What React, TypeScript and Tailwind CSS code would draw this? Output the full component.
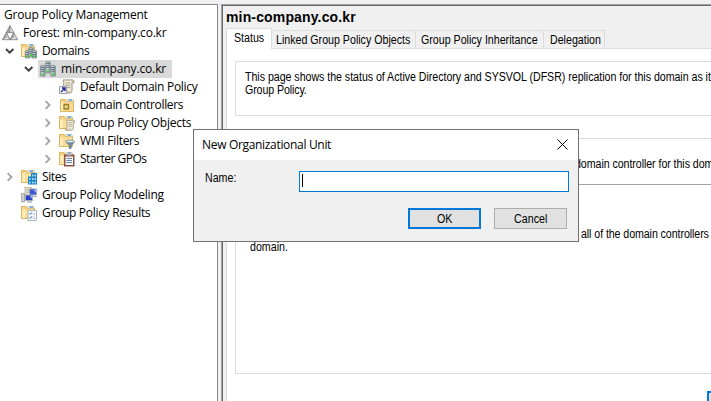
import React from "react";

const seg = "font-['Open_Sans','Noto_Sans',sans-serif] text-[12px] leading-[18px] whitespace-nowrap text-black";
const ms = "font-['Liberation_Sans',Arial,sans-serif] text-[12px] leading-[14px] whitespace-nowrap text-black";

// Condensed sans used by the classic dialogs and tab pages.
function Narrow({ children, center, track = "" }: { children: React.ReactNode; center?: boolean; track?: string }) {
  return (
    <span className={`inline-block scale-x-[0.887] ${center ? "origin-center" : "origin-left"} ${track}`}>{children}</span>
  );
}

function Chevron({ open }: { open?: boolean }) {
  return (
    <svg width="10" height="10" viewBox="0 0 10 10" fill="none" className="shrink-0">
      {open ? (
        <path d="M1 3l3.700 3.700L8.400 3" stroke="#404040" strokeWidth="2" />
      ) : (
        <path d="M2.700 1.200l3.800 3.800-3.800 3.800" stroke="#a6a6a6" strokeWidth="1.9" />
      )}
    </svg>
  );
}

function Folder() {
  return (
    <g>
      <path d="M.5 3V1.500h4.500L6 3h7.500v10.500H.5z" fill="#f3d283" stroke="#dcb65c" />
      <path d="M6.500 1.500h6.500V3.500H6.500z" fill="#fff" stroke="#c9b27a" strokeWidth=".6" />
      <path d="M8.500 1.500h3.500v1.300H8.500z" fill="#3f9be0" />
      <path d="M1 4.500h12V13H1z" fill="#f9dd96" />
      <path d="M1 4.500h3V13H1z" fill="#fdebb8" />
    </g>
  );
}

function Server({ x, y, h = 11 }: { x: number; y: number; h?: number }) {
  return (
    <g transform={`translate(${x} ${y})`}>
      <path d={`M.3 1L2.500.2 4.700 1v${h - 1}H.3z`} fill="#c3ced2" stroke="#65757c" strokeWidth=".7" />
      <path d={`M3.200 1h1.300v${h - 1.5}H3.200z`} fill="#8698a0" />
      <path d="M.8 2.500h3.200M.8 4.500h3.200M.8 6.300h3.200" stroke="#50626b" strokeWidth=".8" />
      <path d={`M1.500 ${h - 2.5}h2v1.700h-2z`} fill="#2fdc1c" />
    </g>
  );
}

function Scroll({ x, y, s }: { x: number; y: number; s: number }) {
  return (
    <g transform={`translate(${x} ${y}) scale(${s})`}>
      <path d="M3 .7h10.500q1.800.8 1.300 3H12.500v9q-.5 2.300-2.500 2.300H1.500q-1-2 1-2.700h1V3.500Q2 2 3 .7z" fill="#f1ead3" stroke="#8d8878" />
      <path d="M12.300 3.500V1.500q1.500-.8 2.300.7v1.300z" fill="#c8bf9f" />
      <path d="M5.500 4h5M5.500 6.500h5M5.500 9h5" stroke="#9c9886" />
      <path d="M2.500 13.500h7.500" stroke="#b9b294" />
    </g>
  );
}

function Icon({ kind }: { kind: string }) {
  return (
    <svg width="16" height="16" viewBox="0 0 16 16" fill="none" className="shrink-0">
      {kind === "forest" && (
        <g stroke="#707070" strokeWidth=".8" strokeLinejoin="round">
          <path d="M8 .6L15.500 14.700H.5z" fill="#fff" />
          <path d="M8 .8v6.400L4.500 7.600z" fill="#a5a5a5" strokeWidth=".3" />
          <path d="M8 .8v6.400l3.500.4z" fill="#dedede" strokeWidth=".3" />
          <path d="M4.400 7.700v4.800L.7 14.600z" fill="#a5a5a5" strokeWidth=".3" />
          <path d="M4.400 7.700v4.800L8 14.600z" fill="#dedede" strokeWidth=".3" />
          <path d="M11.600 7.700v4.800L8 14.600z" fill="#a5a5a5" strokeWidth=".3" />
          <path d="M11.600 7.700v4.800l3.700 2.100z" fill="#dedede" strokeWidth=".3" />
          <path d="M4.400 7.700h7.200L8 14.600z" fill="#fff" />
        </g>
      )}
      {kind === "domains" && (
        <g>
          <Folder />
          <Server x={4} y={7} h={8} />
          <Server x={7.5} y={4} h={10} />
          <Server x={11} y={7} h={8} />
        </g>
      )}
      {kind === "domain" && (
        <g>
          <Server x={5.5} y={0} h={12} />
          <Server x={0.3} y={4} />
          <Server x={10.6} y={4} />
        </g>
      )}
      {kind === "policy" && (
        <g>
          <Scroll x={1.5} y={0.3} s={0.92} />
          <path d="M.5 7.500h7v7h-7z" fill="#fff" stroke="#9b9bb4" />
          <path d="M2 13l4-4M2.800 9h3.200v3.200" stroke="#25259b" strokeWidth="1.4" />
        </g>
      )}
      {kind === "ou" && (
        <g transform="translate(1 1)">
          <Folder />
          <path d="M4 6.500h4.500V11H4z" fill="#e3d590" stroke="#9c7d25" strokeWidth="1.3" />
        </g>
      )}
      {kind === "gpo" && (
        <g>
          <Folder />
          <Scroll x={5.5} y={4.8} s={0.7} />
        </g>
      )}
      {kind === "wmi" && (
        <g>
          <Folder />
          <path d="M6.500 8.500l3.800 4V16l2-1v-2.500l3.500-4z" fill="#6f8ea5" stroke="#48667c" strokeWidth=".6" />
          <ellipse cx="11.2" cy="8.5" rx="4.5" ry="1.3" fill="#e4eef3" stroke="#5d7b8e" strokeWidth=".7" />
        </g>
      )}
      {kind === "starter" && (
        <g>
          <Folder />
          <path d="M5 3.500h10.500v12H5z" fill="#8e5343" />
          <path d="M6.500 5.500H14V14H6.500z" fill="#f4f7fa" />
          <path d="M7.500 7.500h5.500M7.500 9.500h5.500M7.500 11.500h5.500" stroke="#668aab" />
          <path d="M8 2.500h4.500v2H8z" fill="#aab9c4" />
        </g>
      )}
      {kind === "sites" && (
        <g>
          <Folder />
          <path d="M10 4h6v11.500H7V7.500h3z" fill="#1a82c6" />
          <path d="M11 5.500h1.500v2H11zM13.500 5.500H15v2h-1.500zM11 9h1.500v2H11zM13.500 9H15v2h-1.500zM8 9h1.500v2H8zM8 12.500h1.500v2H8zM11 12.500h1.500v2H11zM13.500 12.500H15v2h-1.500z" fill="#a9dcf8" />
        </g>
      )}
      {kind === "model" && (
        <g>
          <Scroll x={2} y={0} s={0.6} />
          <path d="M.5 6.500h3V15h-3z" fill="#cbd0d5" stroke="#8d949a" strokeWidth=".7" />
          <path d="M8.500 2h7v6h-7z" fill="#3f55d0" stroke="#a3abba" />
          <path d="M12.500 3.500L15 2.500v3z" fill="#a9b9f5" />
          <path d="M4.500 8h7v5.500h-7z" fill="#2a3fc4" stroke="#a3abba" />
          <path d="M8.500 9.500l2.500-1v3z" fill="#a9b9f5" />
          <path d="M6 15h5M12.500 9.500h3" stroke="#8f99a2" />
        </g>
      )}
      {kind === "results" && (
        <g>
          <Folder />
          <path d="M7 5.500h8.500v10H7z" fill="#f6fafc" stroke="#a7b7c2" />
          <path d="M8.300 8.500l1 1 1.700-2.300M8.300 12.500l1 1 1.700-2.300" stroke="#3977b6" />
          <path d="M12.200 9h2M12.200 13h2" stroke="#8fa3b2" />
        </g>
      )}
    </svg>
  );
}

type Row = { label: string; kind: string; pad: string; arrow?: "open" | "closed"; selected?: boolean; track: string };

const rows: Row[] = [
  { label: "Forest: min-company.co.kr", kind: "forest", pad: "pl-[2px]", track: "tracking-[-0.21px]" },
  { label: "Domains", kind: "domains", pad: "pl-[5px]", arrow: "open", track: "tracking-[-0.35px]" },
  { label: "min-company.co.kr", kind: "domain", pad: "pl-[24px]", arrow: "open", selected: true, track: "tracking-[-0.13px]" },
  { label: "Default Domain Policy", kind: "policy", pad: "pl-[59px]", track: "tracking-[-0.28px]" },
  { label: "Domain Controllers", kind: "ou", pad: "pl-[43px]", arrow: "closed", track: "tracking-[-0.33px]" },
  { label: "Group Policy Objects", kind: "gpo", pad: "pl-[43px]", arrow: "closed", track: "tracking-[-0.25px]" },
  { label: "WMI Filters", kind: "wmi", pad: "pl-[43px]", arrow: "closed", track: "tracking-[-0.28px]" },
  { label: "Starter GPOs", kind: "starter", pad: "pl-[43px]", arrow: "closed", track: "tracking-[-0.5px]" },
  { label: "Sites", kind: "sites", pad: "pl-[5px]", arrow: "closed", track: "tracking-[-0.4px]" },
  { label: "Group Policy Modeling", kind: "model", pad: "pl-[21px]", track: "tracking-[-0.2px]" },
  { label: "Group Policy Results", kind: "results", pad: "pl-[21px]", track: "tracking-[-0.3px]" },
];

function Tree() {
  return (
    <aside className="w-[218px] shrink-0 border-t border-r border-[#828790] bg-white pt-[1px]">
      <div className={`${seg} h-[18px] pl-[4px] tracking-[-0.2px]`}>Group Policy Management</div>
      {rows.map((r) => (
        <div key={r.label} className={`flex h-[18px] items-center ${r.pad}`}>
          {r.arrow && (
            <span className="mr-[6px] flex">
              <Chevron open={r.arrow === "open"} />
            </span>
          )}
          <span className={`flex h-[18px] items-center ${r.selected ? "-ml-[2px] bg-[#d9d9d9] pl-[2px] pr-[6px]" : ""}`}>
            <Icon kind={r.kind} />
            <span className={`${seg} ml-[5px] ${r.track}`}>{r.label}</span>
          </span>
        </div>
      ))}
    </aside>
  );
}

function Dialog() {
  return (
    <div className="absolute left-[193px] top-[129px] h-[113px] w-[386px] border border-[#707070] bg-[#f0f0f0]">
      <div className="flex h-[30px] items-center justify-between bg-white pl-[8px] pr-[10px]">
        <span className={`${seg} tracking-[-0.32px]`}>New Organizational Unit</span>
        <svg width="11" height="11" viewBox="0 0 11 11" stroke="#000" strokeWidth="1" className="-mt-[2px]">
          <path d="M.5.5l10 10M10.500.5l-10 10" />
        </svg>
      </div>
      <div className="flex pl-[11px] pr-[9px] pt-[11px]">
        <span className={`${ms} w-[94px]`}>
          <Narrow>Name:</Narrow>
        </span>
        <div className="flex h-[21px] w-[270px] border border-[#0078d7] bg-white pl-[2px] pt-[2px]">
          <span className="h-[13px] w-px bg-black" />
        </div>
      </div>
      <div className="flex justify-end gap-[13px] pr-[11px] pt-[16px]">
        <button className={`${ms} h-[21px] w-[73px] border-2 border-[#0078d7] bg-[#e1e1e1]`}>
          <Narrow center>OK</Narrow>
        </button>
        <button className={`${ms} h-[21px] w-[73px] border border-[#adadad] bg-[#e1e1e1]`}>
          <Narrow center>Cancel</Narrow>
        </button>
      </div>
    </div>
  );
}

export default function App() {
  return (
    <div className="relative flex h-[401px] w-[711px] overflow-hidden bg-[#f0f0f0] pt-[4px]">
      <Tree />
      <main className="ml-[3px] flex flex-1 flex-col overflow-hidden border-l border-t border-[#a0a0a0]">
        <div className="flex flex-1 flex-col border-l border-t border-[#696969] pl-[3px]">
          <h1 className="h-[22px] whitespace-nowrap pt-[2px] font-['Liberation_Sans',Arial,sans-serif] text-[14px] font-bold leading-[18px] tracking-[0.15px] text-black">
            min-company.co.kr
          </h1>
          <div className="flex h-[20px] items-end">
            <div className={`${ms} relative z-10 h-[21px] w-[46px] self-start border border-b-0 border-[#dcdcdc] bg-white pl-[7px] pt-[2px]`}>
              <Narrow>Status</Narrow>
            </div>
            <div className={`${ms} h-[18px] w-[144px] border-r border-t border-[#dcdcdc] pl-[4px] pt-[2px]`}>
              <Narrow>Linked Group Policy Objects</Narrow>
            </div>
            <div className={`${ms} h-[18px] w-[128px] border-r border-t border-[#dcdcdc] pl-[5px] pt-[2px]`}>
              <Narrow>Group Policy Inheritance</Narrow>
            </div>
            <div className={`${ms} h-[18px] w-[61px] border-r border-t border-[#dcdcdc] pl-[6px] pt-[2px]`}>
              <Narrow>Delegation</Narrow>
            </div>
          </div>
          <div className="flex-1 border-l border-t border-[#dcdcdc] bg-white pl-[8px] pt-[12px]">
            <section className="h-[55px] border border-r-0 border-[#dcdcdc] pl-[9px] pt-[8px]">
              <p className={`${ms} h-[13px]`}>
                <Narrow track="tracking-[-0.04px]">
                  This page shows the status of Active Directory and SYSVOL (DFSR) replication for this domain as it
                </Narrow>
              </p>
              <p className={`${ms} h-[13px]`}>
                <Narrow track="tracking-[-0.12px]">Group Policy.</Narrow>
              </p>
            </section>
            <section className="mt-[22px] h-[236px] border border-r-0 border-[#dcdcdc]">
              <p className={`${ms} ml-[339px] mt-[18px]`}>
                <Narrow track="tracking-[-0.07px]">domain controller for this domain</Narrow>
              </p>
              <div className="ml-[14px] mt-[13px] h-px bg-[#a0a0a0]" />
              <p className={`${ms} ml-[345px] mt-[42px] h-[13px]`}>
                <Narrow track="tracking-[-0.09px]">all of the domain controllers</Narrow>
              </p>
              <p className={`${ms} ml-[14px]`}>
                <Narrow>domain.</Narrow>
              </p>
            </section>
            <div className="ml-[472px] mt-[17px] h-[21px] w-[73px] border-2 border-[#0078d7] bg-[#e1e1e1]" />
          </div>
        </div>
      </main>
      <Dialog />
    </div>
  );
}
